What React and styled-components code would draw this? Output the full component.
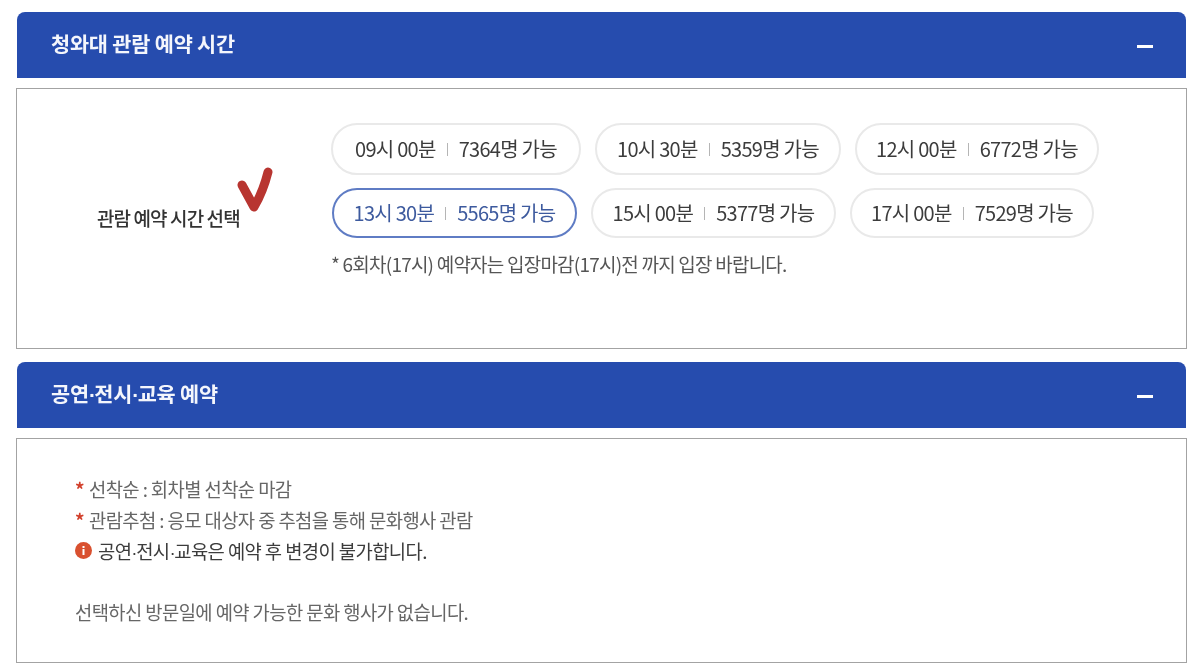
import React from 'react';
import styled, { createGlobalStyle } from 'styled-components';

const GlobalStyle = createGlobalStyle`
    body {
        margin: 0;
        background: #fff;
        font-family: "Noto Sans CJK KR", "Noto Sans", sans-serif;
        color: #444;
    }
`;

const Page = styled.div`
    width: 1171px;
    padding: 12px 0 0 16px;
    filter: blur(0.4px);
`;

const Section = styled.section`
    margin-bottom: 13px;
`;

const Header = styled.div`
    height: 66px;
    margin: 0 1px 10px;
    padding: 0 33px 0 34px;
    display: flex;
    align-items: center;
    justify-content: space-between;
    background: #264cae;
    border-radius: 8px 8px 0 0;
    color: #f4f6fc;
    font-size: 20.8px;
    font-weight: 700;
    letter-spacing: -0.2px;
`;

const HeaderTitle = styled.span`
    margin-top: -5px;
`;

const Collapse = styled.span`
    width: 16px;
    height: 3px;
    margin-top: 2px;
    background: #fff;
`;

const Panel = styled.div`
    box-sizing: border-box;
    height: ${ props => props.$height }px;
    border: 1px solid #a3a3a3;
    background: #fff;
`;

const TimePanel = styled( Panel )`
    display: flex;
    align-items: center;
`;

const SelectLabel = styled.div`
    position: relative;
    box-sizing: border-box;
    width: 314px;
    padding: 0 0 2px 80px;
    color: #333;
    font-size: 19px;
    font-weight: 500;
    letter-spacing: -0.9px;
`;

const Check = styled.svg`
    position: absolute;
    left: 219px;
    top: -40px;
    width: 40px;
    height: 50px;
`;

const Options = styled.div`
    align-self: flex-start;
    padding-top: 34px;
`;

const Row = styled.div`
    display: flex;
    gap: 14px;
    height: ${ props => props.$height }px;
    margin: 0 0 13px ${ props => props.$indent || 0 }px;
`;

const Pill = styled.button`
    box-sizing: border-box;
    width: ${ props => props.$width }px;
    display: flex;
    align-items: center;
    justify-content: center;
    padding: 0;
    background: #fff;
    border: ${ props => props.$selected ? '2px solid #5f7cc4' : '2px solid #e9e9e9' };
    border-radius: 26px;
    color: ${ props => props.$selected ? '#3d5a9e' : '#3c3c3c' };
    font-family: inherit;
    font-size: 20px;
    font-weight: 400;
    letter-spacing: -0.72px;
    white-space: nowrap;
`;

const PillText = styled.span`
    margin-top: -2px;
`;

const Divider = styled.span`
    width: 1px;
    height: 13px;
    margin: 0 11px;
    background: #b5b5b5;
`;

const Note = styled.p`
    margin: 0;
    color: #555;
    font-size: 19px;
    letter-spacing: -0.78px;
    line-height: 26px;
`;

const InfoPanel = styled( Panel )`
    padding: 34px 0 0 58px;
`;

const InfoLine = styled.div`
    display: flex;
    align-items: center;
    height: 31px;
    color: ${ props => props.$dark ? '#3c3c3c' : '#666' };
    font-size: 18.8px;
    letter-spacing: -0.6px;
`;

const Star = styled.span`
    width: 14px;
    color: #d2402c;
    font-weight: 700;
`;

const InfoIcon = styled.svg`
    width: 17px;
    height: 17px;
    margin-right: 6px;
`;

const Dot = styled.span`
    font-family: "Liberation Sans", sans-serif;
    letter-spacing: -1.5px;
`;

const EmptyMessage = styled.p`
    margin: 30px 0 0;
    color: #666;
    font-size: 18.8px;
    letter-spacing: -0.6px;
    line-height: 31px;
`;

const firstRow = [
    { time: '09시 00분', count: '7364명 가능', width: 250 },
    { time: '10시 30분', count: '5359명 가능', width: 246 },
    { time: '12시 00분', count: '6772명 가능', width: 244 },
];

const secondRow = [
    { time: '13시 30분', count: '5565명 가능', width: 245, selected: true },
    { time: '15시 00분', count: '5377명 가능', width: 245 },
    { time: '17시 00분', count: '7529명 가능', width: 244 },
];

const TimeOption = ( { option } ) => (
    <Pill $selected={ option.selected } $width={ option.width }>
        <PillText>{ option.time }</PillText>
        <Divider />
        <PillText>{ option.count }</PillText>
    </Pill>
);

const App = () => {
    return (
        <Page>
            <GlobalStyle />
            <Section>
                <Header>
                    <HeaderTitle>청와대 관람 예약 시간</HeaderTitle>
                    <Collapse />
                </Header>
                <TimePanel $height={ 261 }>
                    <SelectLabel>
                        관람 예약 시간 선택
                        <Check viewBox="0 0 40 50">
                            <path d="M6 21 L18 43 Q27 28 32 8" fill="none" stroke="#b83530" strokeWidth="9" strokeLinecap="round" strokeLinejoin="round" />
                        </Check>
                    </SelectLabel>
                    <Options>
                        <Row $height={ 52 }>
                            { firstRow.map( ( option ) => (
                                <TimeOption key={ option.time } option={ option } />
                            )) }
                        </Row>
                        <Row $height={ 50 } $indent={ 1 }>
                            { secondRow.map( ( option ) => (
                                <TimeOption key={ option.time } option={ option } />
                            )) }
                        </Row>
                        <Note>* 6회차(17시) 예약자는 입장마감(17시)전 까지 입장 바랍니다.</Note>
                    </Options>
                </TimePanel>
            </Section>
            <Section>
                <Header>
                    <HeaderTitle>공연<Dot>·</Dot>전시<Dot>·</Dot>교육 예약</HeaderTitle>
                    <Collapse />
                </Header>
                <InfoPanel $height={ 225 }>
                    <InfoLine><Star>*</Star>선착순 : 회차별 선착순 마감</InfoLine>
                    <InfoLine><Star>*</Star>관람추첨 : 응모 대상자 중 추첨을 통해 문화행사 관람</InfoLine>
                    <InfoLine $dark>
                        <InfoIcon viewBox="0 0 17 17">
                            <circle cx="8.5" cy="8.5" r="8.5" fill="#d9502f" />
                            <rect x="7.5" y="7" width="2" height="6" fill="#fff" />
                            <rect x="7.5" y="4" width="2" height="2" fill="#fff" />
                        </InfoIcon>
                        <span>공연<Dot>·</Dot>전시<Dot>·</Dot>교육은 예약 후 변경이 불가합니다.</span>
                    </InfoLine>
                    <EmptyMessage>선택하신 방문일에 예약 가능한 문화 행사가 없습니다.</EmptyMessage>
                </InfoPanel>
            </Section>
        </Page>
    );
};

export default App;
